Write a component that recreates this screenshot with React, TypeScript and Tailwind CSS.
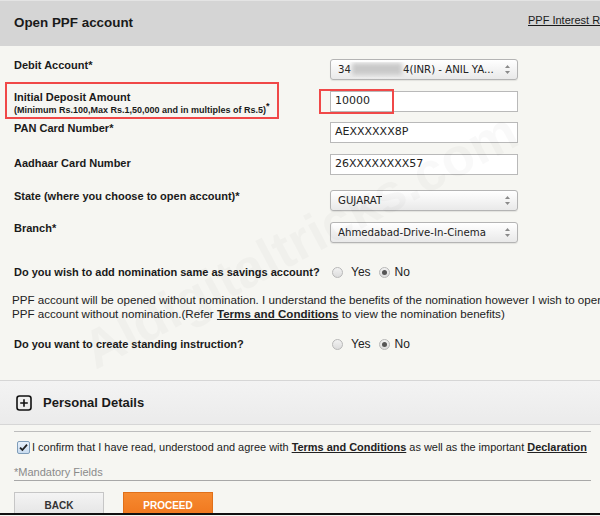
import React from "react";

const SelectArrows = () => (
  <svg width="7" height="11" viewBox="0 0 7 11" className="shrink-0">
    <path d="M3.5 1 L6 4 L1 4 Z" fill="#8a8a8a" />
    <path d="M3.5 10 L6 7 L1 7 Z" fill="#8a8a8a" />
  </svg>
);

const Select = ({ children }: { children: React.ReactNode }) => (
  <div className="w-[188px] h-[21px] rounded-[3px] border border-[#b4b4b4] bg-gradient-to-b from-[#ffffff] to-[#e9e9e9] flex items-center justify-between pl-[7px] pr-[6px] text-[10.2px] text-[#222] shadow-[0_1px_1px_rgba(0,0,0,0.08)] [font-family:'DejaVu_Sans',Verdana,sans-serif]">
    <div className="flex items-center whitespace-nowrap overflow-hidden">{children}</div>
    <SelectArrows />
  </div>
);

const Input = ({ value }: { value: string }) => (
  <div className="w-[188px] h-[21px] border border-[#b9b9b9] bg-white flex items-center pl-[4px] text-[11px] text-[#222] [font-family:'DejaVu_Sans',Verdana,sans-serif]">
    {value}
  </div>
);

const Radio = ({ checked }: { checked?: boolean }) => (
  <span className="w-[11px] h-[11px] rounded-full border border-[#b8b8b8] bg-gradient-to-b from-[#f2f2f2] to-[#dcdcdc] flex items-center justify-center shrink-0">
    {checked && <span className="w-[5px] h-[5px] rounded-full bg-[#555]" />}
  </span>
);

const RadioPair = () => (
  <div className="flex items-center text-[12px] text-[#222] pl-[2px]">
    <Radio />
    <span className="ml-[8px]">Yes</span>
    <span className="ml-[8px]"><Radio checked /></span>
    <span className="ml-[5px]">No</span>
  </div>
);

export default function App() {
  return (
    <div className="relative w-[600px] h-[516px] overflow-hidden bg-[#f6f6f2] flex flex-col [font-family:'Liberation_Sans',Arial,sans-serif] text-[#1a1a1a]">
      {/* Header */}
      <div className="h-[46px] shrink-0 bg-[#d5d5d5] border-t border-[#e4e4e4] flex justify-between">
        <div className="pl-[14px] pt-[13px] text-[13.4px] font-bold leading-[18px]">Open PPF account</div>
        <div className="pt-[12px] text-[11px] leading-[14px] underline whitespace-nowrap w-[72px] overflow-hidden">PPF Interest Rates</div>
      </div>

      {/* Debit account */}
      <div className="flex mt-[12px] h-[24px] shrink-0">
        <div className="w-[330px] pl-[14px] text-[11px] font-bold leading-[14px]">Debit Account*</div>
        <div className="mt-[1px]">
          <Select>
            <span>34</span>
            <span className="w-[50px] h-[12px] bg-[#c9c9c9] blur-[2px] mx-[1px]" />
            <span>4(INR) - ANIL YA...</span>
          </Select>
        </div>
      </div>

      {/* Initial deposit */}
      <div className="flex h-[37px] shrink-0">
        <div className="w-[330px]">
          <div className="ml-[5px] w-[274px] h-[37px] border-2 border-[#f04848] pl-[7px] pt-[6px]">
            <div className="text-[11px] font-bold leading-[14px]">Initial Deposit Amount</div>
            <div className="text-[9px] font-bold leading-[12px] whitespace-nowrap">
              (Minimum Rs.100,Max Rs.1,50,000 and in multiples of Rs.5)<sup className="text-[9px]">*</sup>
            </div>
          </div>
        </div>
        <div className="relative mt-[9px]">
          <Input value="10000" />
          <div className="absolute left-[-11px] top-[-2px] w-[75px] h-[25px] border-2 border-[#f04848]" />
        </div>
      </div>

      {/* PAN */}
      <div className="flex h-[28px] shrink-0">
        <div className="w-[330px] pl-[14px] pt-[2px] text-[11px] font-bold leading-[14px]">PAN Card Number*</div>
        <div className="mt-[3px]"><Input value="AEXXXXXX8P" /></div>
      </div>

      {/* Aadhaar */}
      <div className="flex h-[35px] shrink-0">
        <div className="w-[330px] pl-[14px] pt-[9px] text-[11px] font-bold leading-[14px]">Aadhaar Card Number</div>
        <div className="mt-[7px]"><Input value="26XXXXXXXX57" /></div>
      </div>

      {/* State */}
      <div className="flex h-[32px] shrink-0">
        <div className="w-[330px] pl-[14px] pt-[7px] text-[11px] font-bold leading-[14px]">State (where you choose to open account)*</div>
        <div className="mt-[8px]"><Select>GUJARAT</Select></div>
      </div>

      {/* Branch */}
      <div className="flex h-[36px] shrink-0">
        <div className="w-[330px] pl-[14px] pt-[7px] text-[11px] font-bold leading-[14px]">Branch*</div>
        <div className="mt-[8px]"><Select>Ahmedabad-Drive-In-Cinema</Select></div>
      </div>

      {/* Nomination */}
      <div className="flex items-center mt-[15px] h-[14px] shrink-0">
        <div className="w-[330px] pl-[14px] text-[11px] font-bold leading-[14px] whitespace-nowrap">Do you wish to add nomination same as savings account?</div>
        <RadioPair />
      </div>

      <div className="mt-[14px] pl-[12px] text-[11.6px] leading-[14px] text-[#222] whitespace-nowrap shrink-0 overflow-hidden">
        <div>PPF account will be opened without nomination. I understand the benefits of the nomination however I wish to open</div>
        <div>
          PPF account without nomination.(Refer <span className="font-bold underline">Terms and Conditions</span> to view the nomination benefits)
        </div>
      </div>

      {/* Standing instruction */}
      <div className="flex items-center mt-[16px] h-[14px] shrink-0">
        <div className="w-[330px] pl-[14px] text-[11px] font-bold leading-[14px]">Do you want to create standing instruction?</div>
        <RadioPair />
      </div>

      {/* Personal details */}
      <div className="mt-[29px] h-[45px] shrink-0 border-t border-b border-[#d6d6d6] bg-gradient-to-b from-[#f3f3f3] to-[#ebebeb] flex items-center pl-[16px]">
        <svg width="16" height="16" viewBox="0 0 16 16" className="shrink-0">
          <rect x="1" y="1" width="14" height="14" rx="2.5" fill="none" stroke="#111" strokeWidth="1.6" />
          <path d="M8 4.2 V11.8 M4.2 8 H11.8" stroke="#111" strokeWidth="1.6" />
        </svg>
        <span className="ml-[11px] text-[13px] font-bold">Personal Details</span>
      </div>

      <div className="mt-[6px] mx-[14px] w-[577px] border-t border-[#bdbdbd] shrink-0" />

      {/* Confirm */}
      <div className="flex items-center mt-[8px] h-[14px] pl-[17px] shrink-0">
        <span className="w-[13px] h-[13px] rounded-[2px] border border-[#7f9db9] bg-gradient-to-b from-[#e8f1fb] to-[#c9dcf0] flex items-center justify-center shrink-0">
          <svg width="9" height="9" viewBox="0 0 9 9">
            <path d="M1 4.6 L3.4 7 L8 1.6" fill="none" stroke="#222" strokeWidth="1.8" />
          </svg>
        </span>
        <span className="ml-[2px] text-[10.95px] text-[#222] whitespace-nowrap">
          I confirm that I have read, understood and agree with <span className="font-bold underline">Terms and Conditions</span> as well as the important <span className="font-bold underline">Declaration</span>
        </span>
      </div>

      <div className="mt-[12px] pl-[14px] text-[11px] leading-[13px] text-[#8a8a8a] shrink-0">*Mandatory Fields</div>
      <div className="mt-[1px] mx-[14px] w-[577px] border-t border-[#a8a8a8] shrink-0" />

      {/* Buttons */}
      <div className="mt-[11px] h-[21px] overflow-hidden flex pl-[14px] gap-[19px] shrink-0">
        <div className="w-[90px] h-[28px] border border-[#c6c6c6] bg-gradient-to-b from-[#f4f4f4] to-[#e2e2e2] flex items-start justify-center pt-[5px] text-[10px] font-bold text-[#333]">BACK</div>
        <div className="w-[90px] h-[28px] border border-[#e0701a] bg-gradient-to-b from-[#f68a30] to-[#ef741a] flex items-start justify-center pt-[5px] text-[10px] font-bold text-white">PROCEED</div>
      </div>
      <div className="h-[2px] bg-[#111] shrink-0" />

      {/* Watermark */}
      <div className="pointer-events-none absolute left-[40px] top-[200px] w-[520px] text-center text-[54px] font-bold text-black/[0.025] rotate-[-28deg] whitespace-nowrap">
        AIdigitaltricks.com
      </div>
    </div>
  );
}
